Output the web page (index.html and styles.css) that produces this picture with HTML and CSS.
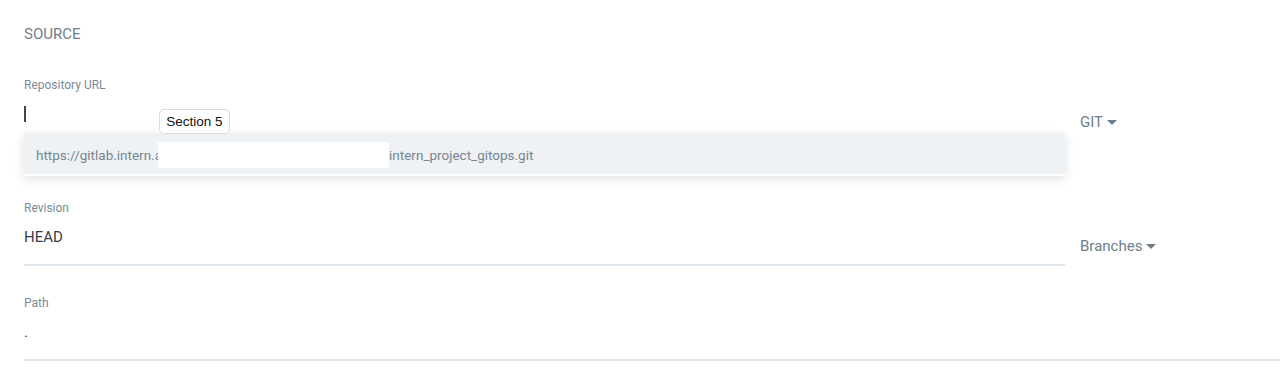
FILE: index.html
```html
<!DOCTYPE html>
<html lang="en">
<head>
  <meta charset="UTF-8" />
  <title>Source</title>
  <link rel="stylesheet" href="styles.css">
</head>
<body>
  <div class="section-title">SOURCE</div>

  <div class="field field-repo">
    <div class="field-main">
      <div class="label">Repository URL</div>
      <div class="input"><span class="cursor"></span></div>

      <div class="tooltip">Section 5</div>
      <div class="suggest">
        <div class="suggest-item">
          <span class="cut">https://gitlab.intern.a</span><span class="redact"></span><span>intern_project_gitops.git</span>
        </div>
      </div>
    </div>
    <div class="field-side">GIT <span class="caret"></span></div>
  </div>

  <div class="field field-rev">
    <div class="field-main">
      <div class="label">Revision</div>
      <div class="input value">HEAD</div>
    </div>
    <div class="field-side">Branches <span class="caret"></span></div>
  </div>

  <div class="field-path">
    <div class="label">Path</div>
    <div class="input value">.</div>
  </div>
</body>
</html>
```

FILE: styles.css
```css
body { margin: 0; padding: 0 0 0 24px; font-family: Roboto, "Open Sans", sans-serif; background: #fff; }
.section-title { padding-top: 25px; font-size: 15px; line-height: 18px; color: #6d7f8b; }

.field { display: flex; gap: 15px; }
.field-main { width: 1041px; position: relative; }
.field-side {
  padding-top: 36px;
  font-size: 15px;
  line-height: 18px;
  color: #6d7f8b;
  display: flex;
  align-items: center;
  gap: 4px;
  height: 18px;
}
.caret {
  width: 0; height: 0;
  border-left: 5px solid transparent;
  border-right: 5px solid transparent;
  border-top: 5px solid #6d7f8b;
  margin-top: 1px;
}

.field-repo { margin-top: 34px; }
.field-rev { margin-top: 57px; }
.field-rev .field-side { padding-top: 37px; }
.field-path { margin-top: 29px; }

.label { font-size: 12px; line-height: 16px; color: #7b8a95; }
.input {
  height: 36px;
  padding-top: 12px;
  font-size: 15px;
  line-height: 18px;
  color: #363c4a;
  border-bottom: 2px solid #dee6eb;
}
.field-repo .input { padding-top: 13px; height: 35px; }
.cursor { display: inline-block; width: 2px; height: 16px; background: #444; vertical-align: top; }

.suggest {
  position: absolute;
  left: 0; right: 0; top: 56px;
  background: #fff;
  border-bottom: 2px solid #fff;
  box-shadow: 0 3px 10px rgba(0, 0, 0, 0.12);
  z-index: 1;
}
.suggest-item {
  box-sizing: border-box;
  height: 41px;
  padding: 2px 12px 0;
  display: flex;
  align-items: center;
  background: #eff2f5;
  font-size: 13.5px;
  color: #75858f;
  white-space: nowrap;
}
.redact {
  display: inline-block;
  width: 231px;
  height: 26px;
  margin-left: -4px;
  background: #fff;
  border-radius: 2px;
}

.tooltip {
  position: absolute;
  left: 135px; top: 32px;
  box-sizing: border-box;
  width: 71px; height: 25px;
  border: 1px solid #dadada;
  border-radius: 5px;
  background: #fff;
  font-family: "Liberation Sans", Arial, sans-serif;
  font-size: 13.5px;
  line-height: 23px;
  text-align: center;
  color: #111;
  z-index: 2;
}
```
